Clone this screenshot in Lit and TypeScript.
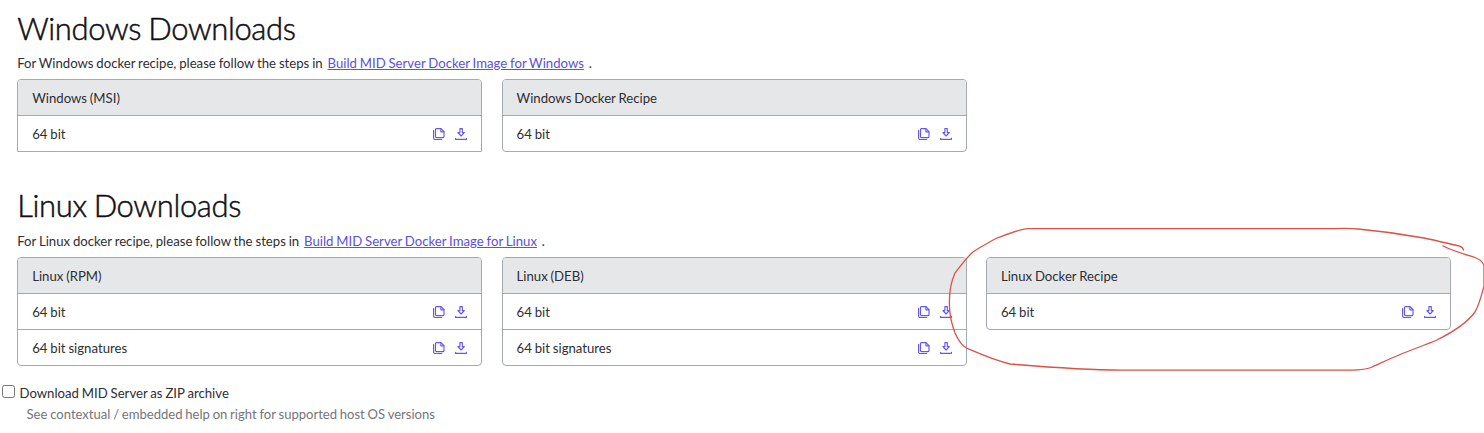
import { LitElement, html, css, svg } from "lit";
import { customElement, property } from "lit/decorators.js";

interface Download {
  title: string;
  rows: string[];
  square?: boolean;
}

const windowsDownloads: Download[] = [
  { title: "Windows (MSI)", rows: ["64 bit"], square: true },
  { title: "Windows Docker Recipe", rows: ["64 bit"] },
];

const linuxDownloads: Download[] = [
  { title: "Linux (RPM)", rows: ["64 bit", "64 bit signatures"] },
  { title: "Linux (DEB)", rows: ["64 bit", "64 bit signatures"] },
  { title: "Linux Docker Recipe", rows: ["64 bit"] },
];

const copyShape = svg`
  <path d="M3.5 0.6H8L11 3.6V8.6Q11 9.6 10 9.6H3.5Q2.5 9.6 2.5 8.6V1.6Q2.5 0.6 3.5 0.6Z"/>
  <path d="M7.9 0.9V3.8H10.9M0.6 2.4V10Q0.6 11.5 2.1 11.5H8.8"/>
`;

const downloadShape = svg`
  <path d="M4.9 0.6H7.3V4.6H9.3L6.1 8L2.9 4.6H4.9Z"/>
  <path d="M0.6 10.2V11.4H11.6V10.2"/>
`;

@customElement("download-card")
export class DownloadCard extends LitElement {
  @property({ attribute: false }) data!: Download;

  static styles = css`
    :host { display: block; }
    .card {
      border: 1px solid #a5a8b5;
      border-radius: 4px;
      overflow: hidden;
      background: #fff;
    }
    .square { border-bottom-left-radius: 0; border-bottom-right-radius: 0; }
    .head, .row {
      box-sizing: border-box;
      display: flex;
      align-items: center;
      height: 35px;
      padding: 0 14px;
      line-height: 18px;
    }
    .head { background: #e6e7e9; }
    .row { height: 36px; border-top: 1px solid #a5a8b5; }
    .label { flex: 1; }
    .actions { display: flex; gap: 10px; }
    .icon {
      display: block;
      width: 12px;
      height: 12px;
      fill: none;
      stroke: #6558e8;
      stroke-width: 1.15;
      stroke-linejoin: round;
      stroke-linecap: round;
    }
  `;

  render() {
    return html`
      <div class="card ${this.data.square ? "square" : ""}">
        <div class="head">${this.data.title}</div>
        ${this.data.rows.map(
          (row) => html`
            <div class="row">
              <span class="label">${row}</span>
              <span class="actions">
                <svg class="icon" viewBox="0 0 12 12">${copyShape}</svg>
                <svg class="icon" viewBox="0 0 12 12">${downloadShape}</svg>
              </span>
            </div>
          `
        )}
      </div>
    `;
  }
}

@customElement("app-root")
export class AppRoot extends LitElement {
  static styles = css`
    :host {
      display: block;
      position: relative;
      height: 433px;
      overflow: hidden;
      background: #fff;
      color: #2e2e33;
      font: 13.17px/18px Lato, "Open Sans", sans-serif;
      word-spacing: -0.5px;
    }
    .section { padding: 0 0 0 17.2px; }
    .first { padding-top: 8px; height: 178px; box-sizing: border-box; }
    .second { padding-top: 8px; height: 188px; box-sizing: border-box; }
    .title {
      margin: 0;
      height: 46px;
      font-size: 31px;
      line-height: 40px;
      font-weight: 300;
      letter-spacing: -0.36px;
      word-spacing: -1px;
      color: #101014;
      -webkit-text-stroke: 0.5px #101014;
    }
    .second .title { line-height: 38px; }
    .intro { height: 25px; line-height: 18px; white-space: pre; }
    .link { color: #5c50e0; text-decoration: underline; margin: 0 2px; }
    .cards {
      display: grid;
      grid-template-columns: repeat(3, 465.2px);
      column-gap: 19.2px;
      align-items: start;
    }
    .option {
      display: flex;
      align-items: center;
      gap: 5px;
      margin-top: 17px;
      padding-left: 2px;
      height: 20px;
    }
    .box {
      box-sizing: border-box;
      width: 12.5px;
      height: 13px;
      margin: -3px 0 0;
      flex: none;
      border: 1px solid #767676;
      border-radius: 2.5px;
      appearance: none;
      background: #fff;
    }
    .hint { padding: 2px 0 0 26.6px; color: #74747a; font-size: 13.04px; }
    .markup {
      position: absolute;
      inset: 0;
      width: 1484px;
      height: 433px;
      pointer-events: none;
      fill: none;
      stroke: #dc5148;
      stroke-width: 1.3;
      stroke-linecap: round;
      stroke-linejoin: round;
    }
  `;

  render() {
    return html`
      <section class="section first">
        <h1 class="title">Windows Downloads</h1>
        <div class="intro">For Windows docker recipe, please follow the steps in <a class="link">Build MID Server Docker Image for Windows</a> .</div>
        <div class="cards">
          ${windowsDownloads.map((d) => html`<download-card .data=${d}></download-card>`)}
        </div>
      </section>
      <section class="section second">
        <h1 class="title">Linux Downloads</h1>
        <div class="intro">For Linux docker recipe, please follow the steps in <a class="link">Build MID Server Docker Image for Linux</a> .</div>
        <div class="cards">
          ${linuxDownloads.map((d) => html`<download-card .data=${d}></download-card>`)}
        </div>
      </section>
      <label class="option">
        <input class="box" type="checkbox" />
        <span>Download MID Server as ZIP archive</span>
      </label>
      <div class="hint">See contextual / embedded help on right for supported host OS versions</div>
      <svg class="markup" viewBox="0 0 1484 433">
        <path d="M1463.5 250C1463 247 1460 246 1457 245.5C1446 243 1436 240.5 1424 238C1402 234 1380 231 1358 229C1349 228 1340 228.5 1330 228.7H1028C1020 229 1008 234 996 238.5C988 243 980 247 973 252C968 256 962 264 955 273C950 284 949 297 949.5 307C950 318 952 325 955 333C958 340 962 346 967.5 348.5C978 353 994 360 1010 364C1040 366.5 1090 370 1122 370.2H1350C1358 370 1365 370 1371 367.5C1379 364 1389 359 1399 355C1411 350 1425 345 1437 340C1451 333 1467 323 1475 312C1480 303 1482 293 1484 286V266C1483 261 1479 259 1475 257.5C1464 254 1453 251 1443 246"/>
      </svg>
    `;
  }
}
